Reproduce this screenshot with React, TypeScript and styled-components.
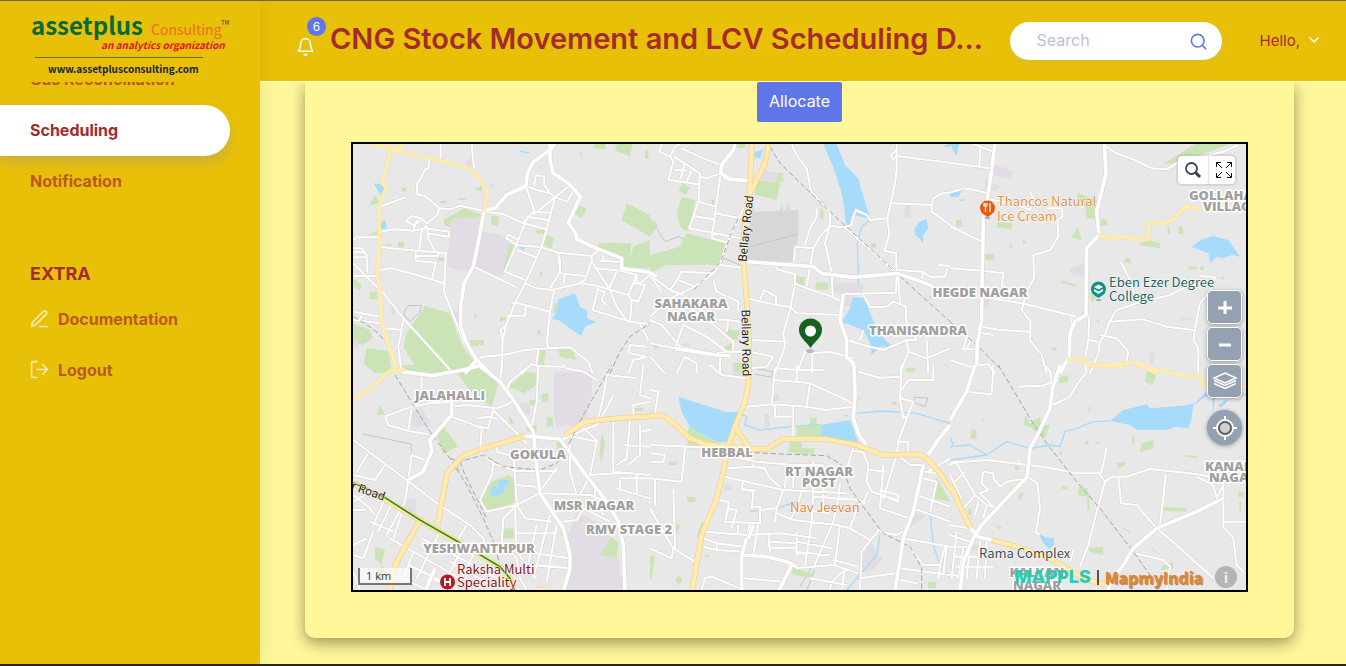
import React from 'react';
import styled, { createGlobalStyle } from 'styled-components';
import { Bell, ChevronDown, Search } from 'lucide-react';

const GlobalStyle = createGlobalStyle`
  *, *::before, *::after { box-sizing: border-box; }
  body { margin: 0; font-family: Inter, "Open Sans", sans-serif; font-size: 16px; color: #a52a2a; background: #fff799; }
  button, input { font: inherit; }
`;

const Shell = styled.div`
  display: flex;
  height: 100vh;
  border-top: 1px solid #666;
  border-bottom: 2px solid #28281e;
  overflow: hidden;
`;

const Sidebar = styled.aside`
  position: relative;
  z-index: 2;
  flex: 0 0 260px;
  display: flex;
  flex-direction: column;
  background: #e9c008;
  box-shadow: 1px 0 20px rgba(0, 0, 0, 0.08);
`;

const Brand = styled.a`
  display: block;
  flex: 0 0 81px;
  svg { display: block; }
`;

const Nav = styled.nav`
  flex: 1;
  overflow: hidden;
`;

const NavList = styled.ul<{ $scrolled?: boolean }>`
  list-style: none;
  margin: ${p => (p.$scrolled ? '-28px' : '0')} 0 0;
  padding: 0;
`;

const NavLink = styled.a<{ $active?: boolean }>`
  display: flex;
  align-items: center;
  gap: 9px;
  height: 51px;
  margin-right: 30px;
  padding: 0 0 2px 30px;
  font-weight: 700;
  text-decoration: none;
  color: ${p => (p.$active ? '#a52a2a' : '#bb5720')};
  background: ${p => (p.$active ? '#fff' : 'transparent')};
  border-radius: 0 60px 60px 0;
  box-shadow: ${p => (p.$active ? '0 7px 12px rgba(95, 118, 232, 0.21)' : 'none')};
  svg { color: #f8ecb5; }
`;

const Divider = styled.hr`
  margin: 10px 13px 20px 30px;
  border: 0;
  border-top: 1px solid #e0b912;
  & + & { margin: 0 13px 20px 30px; }
`;

const NavHeading = styled.h2`
  margin: 0;
  padding: 4px 30px 9px;
  font-size: 18px;
  line-height: 22px;
  font-weight: 700;
`;

const Page = styled.div`
  flex: 1;
  min-width: 0;
  display: flex;
  flex-direction: column;
`;

const TopBar = styled.header`
  flex: 0 0 81px;
  display: flex;
  align-items: center;
  padding: 0 24px 0 36px;
  background: #e9c008;
  border-bottom: 1px solid #fffbd0;
`;

const Alerts = styled.button`
  position: relative;
  flex: none;
  width: 34px;
  height: 44px;
  padding: 0;
  border: 0;
  background: none;
  color: #fff;
  text-align: left;
  svg { display: block; }
`;

const Badge = styled.span`
  position: absolute;
  top: -2px;
  left: 11px;
  width: 19px;
  height: 19px;
  border-radius: 50%;
  background: #5f76e8;
  font-size: 12px;
  line-height: 19px;
  text-align: center;
`;

const Title = styled.h1`
  flex: 1;
  min-width: 0;
  margin: 0;
  overflow: hidden;
  white-space: nowrap;
  font-size: 29px;
  line-height: 36px;
  font-weight: 600;
  padding-bottom: 4px;
`;

const SearchBox = styled.label`
  flex: none;
  display: flex;
  align-items: center;
  width: 212px;
  height: 38px;
  padding: 0 14px 0 27px;
  border-radius: 19px;
  background: #fff;
  color: #5f76e8;
  box-shadow: 0 3px 9px rgba(162, 176, 190, 0.15);
  input {
    flex: 1;
    min-width: 0;
    padding: 0 0 2px;
    border: 0;
    outline: 0;
    background: none;
  }
  input::placeholder { color: #b8c3d5; opacity: 1; }
`;

const Greeting = styled.button`
  flex: none;
  display: flex;
  align-items: center;
  gap: 6px;
  margin-left: 38px;
  padding: 0 0 2px;
  border: 0;
  background: none;
  color: #a52a2a;
  font-size: 15px;
  svg { color: #fff; }
`;

const Content = styled.main`
  flex: 1;
  min-height: 0;
  overflow: hidden;
  padding: 0 52px 26px 45px;
`;

const Card = styled.section`
  display: flex;
  flex-direction: column;
  align-items: center;
  gap: 20px;
  padding: 0 46px 46px;
  border-radius: 0 0 10px 10px;
  background: #fff799;
  box-shadow: 0 5px 15px rgba(0, 0, 0, 0.4);
`;

const Allocate = styled.button`
  height: 40px;
  padding: 0 12px 2px;
  border: 0;
  border-radius: 2px;
  background: #5f76e8;
  color: #fff;
  font-size: 16px;
`;

const MapFrame = styled.div`
  position: relative;
  width: 100%;
  height: 450px;
  border: 2px solid #000;
  background: #e8e8e8;
  overflow: hidden;
`;

const MapCanvas = styled.svg`
  display: block;
  width: 100%;
  height: 100%;
`;

const District = styled.text<{ $start?: boolean }>`
  font: 800 13px "Open Sans", "Noto Sans", sans-serif;
  fill: #a0a0a0;
  stroke: #fff;
  stroke-width: 3px;
  stroke-linejoin: round;
  paint-order: stroke;
  text-anchor: ${p => (p.$start ? 'start' : 'middle')};
`;

const Place = styled.text`
  font: 400 13px "Noto Sans CJK SC", "Noto Sans", sans-serif;
  stroke: #fff;
  stroke-width: 1px;
  stroke-linejoin: round;
  paint-order: stroke;
`;

const RoadName = styled.text`
  font: 400 12px Roboto, sans-serif;
  fill: #222;
  stroke: #fff;
  stroke-width: 1px;
  paint-order: stroke;
  text-anchor: middle;
`;

const MapTools = styled.div`
  position: absolute;
  top: 12px;
  right: 11px;
  display: flex;
  height: 28px;
  border-radius: 4px;
  background: #fff;
  box-shadow: 0 0 0 2px rgba(0, 0, 0, 0.08);
`;

const ToolButton = styled.button`
  display: flex;
  align-items: center;
  justify-content: center;
  width: 30px;
  padding: 0;
  border: 0;
  background: none;
  color: #344450;
  & + & { border-left: 1px solid #f6dfe0; width: 27px; padding-left: 4px; }
`;

const ZoomStack = styled.div`
  position: absolute;
  top: 146px;
  right: 4px;
  display: flex;
  flex-direction: column;
  align-items: center;
  gap: 3px;
`;

const ZoomButton = styled.button<{ $round?: boolean }>`
  display: flex;
  align-items: center;
  justify-content: center;
  width: 35px;
  height: ${p => (p.$round ? '35px' : '34px')};
  margin-top: ${p => (p.$round ? '9px' : '0')};
  padding: 0;
  border: ${p => (p.$round ? '0' : '1px solid #fff')};
  border-radius: ${p => (p.$round ? '50%' : '5px')};
  background: #93a1b0;
  box-shadow: 0 1px 4px rgba(0, 0, 0, 0.35);
`;

const ScaleBar = styled.div`
  position: absolute;
  left: 5px;
  bottom: 5px;
  width: 54px;
  height: 17px;
  padding-left: 6px;
  border: 2px solid #777;
  border-top: 0;
  background: rgba(255, 255, 255, 0.6);
  color: #333;
  font: 11px/16px "Open Sans", sans-serif;
`;

const Attribution = styled.div`
  position: absolute;
  right: 9px;
  bottom: 2px;
  display: flex;
  align-items: center;
  height: 22px;
`;

const Mappls = styled.span`
  color: #27cdb2;
  font: 800 18px/22px Inter, sans-serif;
`;

const Bar = styled.span`
  width: 2px;
  height: 15px;
  margin: 0 6px;
  background: #555;
`;

const MapmyIndia = styled.span`
  color: #e8842a;
  font: 700 16px/22px "Noto Sans CJK SC", sans-serif;
  text-shadow: 1px 1px 1px rgba(90, 40, 0, 0.6);
`;

const InfoButton = styled.button`
  width: 22px;
  height: 22px;
  margin-left: 12px;
  padding: 0;
  border: 0;
  border-radius: 50%;
  background: #b4b4b4;
  color: #eee;
  font: 700 15px/22px "Noto Sans", sans-serif;
`;

type Tile = {
  x: number; y: number;
  green: string; built: string; water: string; stream: string; rail: string;
  minor: string; major: string; trunk: string; light: string;
};

const tiles: Tile[] = [
  {
    x: -9, y: -12,
    green: 'M225 498L300 520L325 590L345 630L375 665L345 700H210L160 620L170 580ZM830 190L900 225V290L815 240ZM748 308L845 310L838 355L900 365V385L815 380V355L790 345L745 330ZM850 320L900 300V370L840 355ZM280 240L345 205L395 225L380 235H330L300 260L285 258ZM465 300L495 318L475 390L448 392L455 340ZM590 285L612 295L605 325L580 315ZM688 195L710 208L695 235L675 222ZM735 12H765L768 28L730 25ZM800 12H848L840 50L795 30ZM10 550L60 570L68 595L35 615L10 600ZM50 625L115 632L125 700H75L40 670ZM625 625L665 625L680 660L630 650ZM360 600H402V615L360 618ZM570 630H588L582 675L565 672ZM10 415L35 435L28 452L12 440ZM60 456H82V478H60ZM145 305H162V322H143ZM52 205L75 165L88 190L60 195ZM372 148L398 134L394 155ZM425 225L447 230L443 260L422 252ZM155 143H168V155H155ZM270 183H290V190H270ZM322 175H348V180H322ZM105 313H125V322H105ZM55 285L85 272V285ZM450 530H468V543H450ZM562 570H572V585H562ZM570 395H577V410H570ZM885 30H895V56H885ZM265 353H283V363H265ZM108 525L112 550H125L112 552ZM372 520L383 530L375 535ZM555 270H585V282H560ZM612 490H620V518H610Z',
    built: 'M305 235L398 232L372 395L330 392L288 378L300 290ZM398 275L450 285L480 300L455 410L372 380ZM680 35H700L696 58ZM415 135L435 128L428 150ZM122 500H135V525H125ZM312 510L328 512L322 550ZM352 58L365 50V80H352ZM10 595L28 610L22 625L10 618Z',
    water: 'M625 478L675 460L690 500L712 512V535L740 547L708 558L692 588L625 540L605 538L618 518ZM70 130L100 135L103 145L92 165ZM95 245L105 240L112 265L92 268ZM505 308L527 315L520 330L500 318ZM510 30L540 38L538 42L510 35Z',
    stream: '',
    rail: 'M10 530L45 550L85 580L105 605M780 700L810 635L840 590L900 550',
    minor: 'M272 12V55M365 12L372 85M238 60L235 85L225 88L215 110L202 130L200 162L225 168L268 205L300 208L330 197L400 212M268 205L262 225L232 250L212 235L185 228L168 243L190 255L212 242M190 272L200 240M95 198L165 172M92 275L130 268L190 272L225 265L297 275V290L232 280M10 300L20 292H88M10 325H35L50 345L52 400M10 337H45M10 352H48M92 320L150 328L205 332L288 338L282 455L345 615M230 255L215 275L207 330M230 255L235 295L255 335M197 335V362L258 368L245 418M197 348H265V338M85 390L125 385L245 418L282 430M10 370L100 460L165 540L310 700M10 408H80M10 515L90 530M35 525L28 542M10 540L95 550L108 565L155 570L158 545L165 535M155 570L145 620L155 700M402 215L460 222L520 250L590 268M528 138L560 150L600 160L615 172L652 185L672 150M528 140L552 212L520 248M552 135L558 105L583 110V135L600 160M662 135L615 172L550 225M615 172L600 230L575 320L525 430L495 490L470 550L458 600L455 700M550 215L600 218M530 230L595 240M530 235L505 300L465 395L525 420M505 300L475 283L470 295L500 315L575 322L625 338L725 348L745 330M500 330L558 352M370 380L500 442M525 430L560 445L605 450L690 430L740 437L835 465M625 338L630 395L600 445M630 355V400L645 402L640 435M645 402L705 408M612 452L600 515L590 610L597 625M485 488H500L600 515M470 527H525L528 495M470 555L452 570L458 605M377 660L400 650L460 645L525 630L595 625L660 622L715 665L728 700M515 700L545 672L560 678L640 680M565 630L558 680M725 348V365L780 450L800 500L835 548M725 365L705 420L690 430M750 362L815 366M740 385L815 392L860 405L835 465L845 485L840 548M745 445L728 510L840 545L900 552M745 450L765 455L755 480L770 495M860 405V430L885 435L865 485L840 478M850 430H875M760 345V360M800 395L775 450M900 405L870 430M835 640L840 615L890 620M840 640L890 650L850 660L835 700M870 552L895 600',
    major: 'M402 215L390 280L370 380L355 405L342 430L332 500V560L350 610L380 660L430 710M402 212L435 205L470 165L528 138L532 100L550 65L600 30L615 12M380 660L345 700M600 12V60L608 98L655 130L692 170L670 215L655 248L680 285V297L745 328L790 345L815 355V385L900 397',
    trunk: '',
    light: 'M60 10L150 30L160 38L270 62L360 85L385 110L410 150L408 190L402 215M150 10L152 30L120 38L110 80L96 128L110 145L92 175L88 220V300L82 400L90 460L95 540L110 600L130 650L138 700',
  },
  {
    x: 891, y: -12,
    green: 'M110 280L232 312L215 375H50L0 400V345L90 320ZM95 172L135 180L130 210L110 275L90 260L80 215ZM0 235L25 255L0 290ZM320 120L390 128L380 180L315 165ZM380 98H400V126H378ZM510 208H520V238H510ZM440 408L465 412L460 440L438 430ZM500 425L535 430V450L495 448ZM232 568L270 572L262 600L228 595ZM250 668H300V700H250ZM665 310L680 312L676 325L660 322ZM100 130L120 145L105 165L85 150ZM260 12H285V24H260ZM388 215L398 190L400 216ZM408 205L415 190L422 218ZM5 615L25 612L18 630ZM225 620L245 610V635H222ZM510 185L525 190V200L512 198ZM768 684H790V692H768ZM835 468L850 470L845 480ZM185 180H192V195H185Z',
    built: 'M340 90L385 100L375 122L320 118ZM555 428L640 430L638 455L610 462L605 495L585 500L580 465L550 455ZM765 198H780L782 230L763 235ZM100 610L120 608L118 622L98 620Z',
    water: 'M520 12H560L585 75L625 115L640 170L662 238L612 225L595 258L588 250L578 170L555 95ZM610 470L645 475L660 520L678 560L705 600L732 622L690 620L665 645L660 610L640 570L575 545L600 505ZM793 268L808 245L830 238L835 265L820 285L818 310L808 295L795 285ZM315 35L340 28L330 55L312 50ZM875 18L900 12V22Z',
    stream: 'M662 238L635 260L622 310L625 400V430',
    rail: 'M360 20L390 70L540 215L740 400L900 545M265 235L240 290L210 370L130 450',
    minor: 'M35 12L28 35L60 50L75 20L90 12M95 25L160 55L212 75M60 50L70 65L55 120L145 133M70 50L105 70L150 100L145 185L118 265L270 295M105 70L90 120M125 90L110 125M75 90L110 92M150 110L170 115L212 100L185 295L235 308M145 185L195 200M195 220L270 235M130 228L190 238M210 375L290 385M210 370L190 400L135 440L60 475L0 530M190 400L95 395L75 430L60 450M0 405L60 450L100 465M0 405L35 455M85 420L135 440M190 420L200 455L265 485V515M298 170L265 240L235 300L210 370M425 12L440 45L470 85L482 150L510 185L540 215V258L585 262M500 205V230L480 265L465 315M435 320L490 325M540 258L510 290L490 325L470 440M540 255L525 310L545 395L548 470M435 320L432 365M378 375L380 388L435 403V430L420 510L400 580L405 620L375 700M435 430L470 445L545 470L580 487M585 262L605 255L608 235L618 210L650 225L660 240L712 235L722 190L735 130L740 90V12M585 262L740 400M722 190L845 195L850 175L875 160L900 158M845 195V215L900 255M740 45L730 60L722 45L738 32M740 48L900 68M712 235L718 285L703 332L738 340L740 400L738 458L585 462M745 410L750 490M745 390L815 395L840 410H885L892 385M640 465L660 502L710 500L730 485L768 500V545M815 415L820 400M865 375L900 378M290 475L380 495L420 500L440 520L570 525M330 480L342 450L378 470V495M0 540L35 555L90 620L180 640M75 625L100 555L170 590L230 635M110 500L180 545L250 605V635M130 535L235 540L300 550M0 610L75 625M200 640L230 635L300 635L370 650M235 540L230 575M300 600L410 605M210 650V700M80 700L105 650L140 670V700M0 650L45 700M370 650L350 680L300 685M440 700L465 635L490 640M487 642V700M490 640L540 635L610 655M590 600L640 615L700 630L770 600L775 635L750 700M775 635L830 655L900 625M770 545L800 600L770 600M830 600L835 700M640 570L630 600',
    major: 'M290 365L380 372L490 380L515 400L610 412L740 400L800 420L850 440M0 398L20 410M580 462L570 540L590 600V650L610 670L612 700M255 12L250 30L215 75L212 100L240 118L295 122M75 625L200 645L240 648',
    trunk: 'M305 12L303 80L298 165M356 12L345 70L298 165L285 240L278 340L290 480L297 600V700',
    light: '',
  },
  {
    x: 1791, y: -12,
    green: 'M735 12H840L680 70L640 72ZM385 160L440 180L435 235L410 235L405 200L380 172ZM455 235L470 240L472 258L448 255ZM383 262L395 300L365 292ZM590 300L630 308V325L562 315ZM140 245L188 250L185 268L140 262ZM105 342H133V359H103ZM525 355H543L540 370L525 367ZM715 378L740 381V389L715 386ZM685 260H699V282H685ZM18 240H36V260H18ZM330 420L380 435L375 440L335 428ZM652 262H660V280H652ZM175 310L190 320L180 322ZM215 300L230 305L220 315ZM812 410L825 412L818 420ZM395 515H405V535H395ZM438 540L450 542L445 550ZM305 622H320V630H305ZM28 177H45V183H28ZM750 380H762V390H750ZM418 455L440 470L425 490Z',
    built: 'M135 75L185 90V118L130 105ZM358 385L400 372L405 412L365 405ZM600 640H615L610 675L598 670ZM105 120L150 140L140 152L105 150ZM100 470H120L112 505L102 500ZM695 530L730 535V540L695 537Z',
    water: 'M725 320L755 298L790 288L835 300L870 350L845 345L820 355L800 350L782 370L775 340ZM0 12H28L18 48ZM0 160L35 152L25 172L0 170Z',
    stream: '',
    rail: 'M0 545L80 615L155 690',
    minor: 'M463 15L500 40L555 60L605 85L650 88L680 70L820 35L865 15M90 20L88 80M0 68L120 85M70 12L130 35M0 158L40 145L75 150L120 162M115 178L190 190L240 210L245 195M240 155L255 185M290 205H335L338 230L322 240L325 290L300 330L250 345L252 415L232 450L215 510L242 545L240 600L275 645L290 700M0 258L95 305M0 385L96 392L160 400L155 435L175 445V480M96 470L215 490L380 530M95 560L150 570L240 575M90 578L130 585M512 365L540 420L555 465M750 408L795 412L785 445L750 490L740 540L730 600L745 625V700M750 430L700 445L660 465L560 490L500 510L478 545L465 585L450 605L445 640L420 700M480 545L580 538L650 560L730 570M418 530L415 600L405 655M415 600L445 605M450 585L500 595L535 635L530 665M0 660L60 680L115 672L135 700M50 590L40 628H78M62 600L50 628M365 535V580',
    major: 'M135 12L118 140L100 240L96 430L95 540L82 610L80 680M463 12L468 100L440 215L447 285L410 325L408 525L375 545L360 580L358 650L330 700',
    trunk: '',
    light: 'M445 285L490 297L525 290L545 298H595V248L640 250L670 238L710 198L750 208L765 195L800 165L845 155M352 657L405 658L420 678L560 668L600 690L620 700',
  },
  {
    x: -9, y: 663,
    green: 'M335 0H395L445 60L425 125L370 90L320 20ZM270 170L325 245L280 265L262 215ZM425 350L475 330L490 340L495 410L460 425L410 435L392 405ZM530 20L565 25L560 60L520 85L475 65ZM75 545L105 555L95 600L75 580ZM765 505L805 530L800 580L750 570ZM90 120L105 150H80ZM140 0H250V20H170ZM755 200L765 235L755 290L748 270ZM575 85H595V110H575ZM590 155H608V185H590ZM530 180H560V200H530ZM455 490H490V520H455ZM540 105H560V125L535 118ZM75 630L100 600L105 640L80 650ZM620 230H635V255H620ZM400 180L420 190L405 200ZM475 150L495 175L480 178ZM855 128H880V138H855ZM630 505L645 480V510ZM308 310L325 300L330 320Z',
    built: 'M612 20H725V90L705 180L620 185L612 150ZM680 440L760 480L780 520L750 570L805 580L820 680H640L665 620L650 520L665 480ZM150 410L200 400L195 455L160 440ZM175 140L215 130L240 175L200 190L180 170ZM510 110L540 115V150L515 140Z',
    water: 'M420 380L430 362L442 368L448 345L475 345L478 358L462 365L465 378L440 395L425 392Z',
    stream: '',
    rail: 'M135 30L190 120L240 200L300 280L350 360L400 460L430 530L450 600L480 640M330 290L345 330L410 460M300 280L330 290L400 270L460 305L570 315L620 295L640 270L700 150L740 80L785 0',
    minor: 'M215 30V85M105 155L185 125L240 115L305 110M105 155L115 180L175 198L235 208M185 130L175 195M305 125L350 120L440 130L470 120L490 105M305 155L385 185L415 190L430 130M385 160L410 155L440 160M395 190L390 260L430 295L490 315M455 0L450 50M470 80L480 50L530 10M565 0L560 110L545 190M640 0L650 10L700 20L740 45M10 225L70 270L170 345L260 415L360 480L400 520L410 560M55 265L20 320M105 300L75 345L10 330M185 270L225 285M185 270L175 345L165 410L110 510M430 135L530 235M440 235L500 225M440 240V260L490 275L495 330L500 420M430 295L425 330L390 405L410 440L500 420L550 395L565 385L620 310M490 318H620M495 360L560 365M500 420L525 460L605 470M500 420L460 460L455 530L500 580L510 640L530 675M495 425L500 560L560 640M500 505H620M560 480L530 620M600 450L550 640M620 480L590 650M530 560L655 580M540 600L660 610M570 385L720 390L770 410M635 225L690 200L740 180L770 130L790 90M740 175L760 100L770 30L860 40M880 0L870 90L900 100M650 210L740 230L720 330L690 390M715 330L800 325M790 170V320L900 330M840 165L830 280L800 300M810 340H900M870 180V270L835 300M735 350V400L760 450M800 370L900 400M810 345V380M660 240V320L680 390M640 470L680 465L700 430L780 470M850 150V120L900 110M700 190L745 230M870 200L900 195M820 240L900 245M860 330V390M10 390L60 430L75 450M70 480L105 400M85 500L125 415M130 520L160 430M45 390L10 410M10 435H45M60 470L130 500M50 520L10 540M40 580L70 500M10 570L40 580M120 520L190 560L260 600L330 640M190 560L160 640L230 675M270 500L200 640M340 545L290 640L270 675M375 560L330 650M215 520L350 590L440 640M175 600L300 660M420 600L390 660M300 590L420 660M350 480L320 530M10 620L30 675M240 640L340 680M460 640L510 675',
    major: 'M525 213L630 222L700 320L770 410L805 470L820 540L825 680M385 0L450 50L490 105L550 200L560 300L570 385L640 490L660 570V610L640 680M155 20L245 32L340 15L395 0M305 110V150L240 225L245 260L220 320L175 345M255 610L225 680',
    trunk: 'M645 210L705 170L800 160L900 154M525 213L400 250L340 272L293 320L262 480M10 355L100 400L210 465L340 540L450 605L480 640L495 680M210 465L135 600L118 680M560 676L590 670',
    light: 'M165 15H130L105 28L70 65L10 105M135 0L145 12',
  },
  {
    x: 891, y: 663,
    green: 'M440 182L512 178V218L430 225L440 210ZM115 182L205 235L135 245L112 240ZM480 158H500V180H480ZM420 228L455 230V265L415 262ZM430 608L485 625L480 640L425 628ZM862 340L895 400L900 410L845 400ZM248 0H275V20H250ZM110 395L138 397L135 412L113 410ZM0 570L15 575L5 640H0ZM75 640L90 632L98 647L83 659ZM155 470L165 480L150 520L140 515ZM835 650H858V670H835ZM580 145L595 150L590 160ZM725 110H740V120H725ZM770 8H795V20H770ZM55 290H80V300H58ZM270 372L285 368V385ZM165 570H178V575H165ZM75 475L90 480L82 510ZM435 250H495L490 268H440Z',
    built: 'M785 445L825 450L800 475L775 490ZM650 550L665 530L680 570L700 575L670 615L635 620L640 580ZM342 148H358V185H345ZM370 90L388 85V108H370ZM245 18H275V36H245ZM222 360H244V375H222ZM620 98L635 95V105H622Z',
    water: 'M85 95L230 142L275 140L250 190L235 230L205 232L150 205L120 185L95 140ZM512 180L600 165L625 232L555 220H512Z',
    stream: 'M270 145L290 155L285 180L330 195L420 185L512 178M620 145L700 138L800 145L900 175M690 510L680 570L590 675M860 340L840 440L850 540L870 600M440 410L380 430L300 440',
    rail: 'M290 262L420 268L530 272L575 300L600 370L680 480L700 505L780 545L815 610V680',
    minor: 'M180 0L215 30L290 40M0 75L25 80L15 145M0 240L120 245L235 250M105 250L95 350L0 340M15 345V420M0 430L40 500L70 550L135 590M70 375L75 550M0 550L65 580L70 550M0 265L45 270L40 290H0M375 10L365 115L375 125V155H425M290 125L365 118L470 125L530 135L610 125M370 45L440 50L480 55L590 105L610 120M440 0V50M480 55L470 125M430 120V215M375 10L440 15H520M625 20L690 38L750 35M755 0L750 100L790 110L770 160L745 230L740 270L700 400M755 75L775 45H850V0M755 155H775M750 100L760 160M745 230H775V270M750 275L780 300H820M610 250L580 340M610 258L640 262L655 300L650 350L665 380L740 405M700 300L690 430L780 460M660 315L710 320M690 375L745 390V410L720 400M235 310L310 305L345 310L360 340L390 365M250 275L320 290L430 300H520M310 295V310M225 335L310 355L400 375L590 385M410 300L405 370M430 300V370M280 345L275 370L310 380L305 430M275 375L315 375M205 405L235 410V430L225 470L330 475V425H305M230 430L260 435L245 490M330 435L380 430L400 375M455 380L440 430L420 465M490 290V380L485 470L465 600M520 340V440M570 355L565 400L550 470L490 610M490 395L630 405L645 415M380 445L430 465L560 480L600 490L660 525M600 490L625 420L640 410L655 380M570 480L555 600M380 430L375 470M420 430L540 445M165 500L290 510L390 505L500 520M160 520L200 535L280 545M160 545L200 555L280 560M200 530V555M300 475L290 520M325 480L310 570M265 480L262 510M355 510L360 560M440 570V500M355 530L440 535M355 548H440M440 530L545 550M435 560L540 570M435 610L550 600L625 625M550 585L625 605M545 650L590 610M545 650L540 675M160 640L185 635L270 670M155 675L165 640M280 640L400 650M480 640L590 660M585 610L575 670M690 490L635 560L630 680M760 520L900 545M690 500L740 510L765 495M790 430L900 470M800 390L900 425M820 340L860 350L840 440M825 320L860 325M900 280L835 320M750 610L900 630M780 550L820 600H870L885 545M870 600L865 640M630 640L740 625M750 645L800 655M890 540L880 630',
    major: 'M612 0L615 90L610 160L625 205L650 245M820 300L790 440L760 520L735 680M835 270L860 230L900 180M290 520L275 570V680M280 570L350 575L410 590L440 605M425 600L385 680M310 480L295 520',
    trunk: 'M295 0V60L285 110L255 185L232 250L220 320L200 400L155 510L125 680M0 152H40L75 178L120 220L165 238L310 252H350L400 222H530L620 240L700 270L810 268L835 285L870 325L900 370M255 185L295 245',
    light: 'M235 240L260 215L290 225',
  },
  {
    x: 1791, y: 663,
    green: 'M590 18L618 25L608 62L585 50ZM330 35L355 30V50L325 55ZM65 192L79 194V222L61 219ZM225 150L240 175L270 155L275 180L300 180L285 220L240 185L222 180ZM575 235L610 225V250L570 262ZM385 365L415 370L410 395L383 390ZM500 292H525V302L505 310ZM635 425L710 430V440L640 438ZM210 380L222 385L212 405L205 400ZM415 550L460 545V570L420 560ZM865 380H881V395H865ZM705 270L743 273V278L705 275ZM195 303H207V315H195ZM335 360L353 365V375L337 372ZM512 485L545 500L540 505ZM640 600L670 590V610L630 615ZM412 385H418V435H412ZM92 163L105 165L100 170ZM405 228H415V238H405ZM435 230L450 232V237L435 235ZM545 215H553V235H545ZM840 625L855 620V640L838 638ZM868 410H873V440H868ZM135 480L155 485L150 495ZM55 430H65V450H55ZM325 262L335 258V275Z',
    built: 'M65 540H85V555H65ZM412 122L425 128L420 145L412 140ZM0 140L15 135V150H0ZM600 545L625 560L615 565Z',
    water: 'M480 168L520 135L590 118L600 130L700 122L735 115L765 85L775 90L730 120L725 160L715 190L680 185L650 195L560 195L540 180ZM785 80L795 95L790 145ZM805 120L835 100L825 118L810 128ZM265 505L290 518L312 518V540L298 552L280 535Z',
    stream: 'M0 245L60 240L110 270L170 230L240 250L300 240L330 245L345 200L380 190L430 170L480 168M0 285L110 270M0 215L10 240M765 85L800 80L888 90',
    rail: 'M145 0L240 160L290 235L380 350L450 430L550 560L600 630',
    minor: 'M50 80L125 88L130 0M285 0L300 20L305 60M205 65L275 62L300 55M405 0L410 20L380 60L360 95L310 120M0 293L110 285L232 300L280 305L380 325H450M208 285V295M450 330L465 350L485 335L530 335L600 312L720 325L820 340L888 330M470 245L460 300L450 330M465 350L440 440L415 540L390 605M505 335L513 415L560 420L620 490L690 550L745 600L790 640M647 325L640 400L630 480M740 335L790 360L800 400L820 360M820 340V485L850 520L860 600L880 620M820 470H888M100 320L130 325V340L150 365L170 350L232 340M100 320L95 355L115 375L90 385L135 430M232 335L262 355L270 430L258 500L270 510M20 295L75 390L40 430M45 320L15 350M0 330L35 400M75 390L110 420L130 425M85 410L75 450M110 420L100 460M0 480L55 490M0 510L60 530M0 545H60M10 575H120M20 605H130M60 540L50 640M90 530L80 640M20 500L5 640M110 530L105 640M0 625L40 640M40 550L25 640M555 565L640 585L660 605L650 675M370 555L360 590M15 290L0 300',
    major: 'M330 0L308 70L300 130L265 205L240 250L232 335L170 400L95 480L70 520L40 590L30 680M820 400L740 440L620 490L550 550L520 600L490 640L470 680M75 0L50 80L0 165M62 490L85 515L125 525',
    trunk: 'M0 360L62 490M125 525L200 545L300 580L400 640L465 660',
    light: 'M560 0L620 15L720 35L755 35L760 60L775 62M410 0L520 3M860 65H890',
  },
];

type Layer = { key: keyof Tile; fill?: string; stroke?: string; width?: number; dash?: string };

const layers: Layer[] = [
  { key: 'green', fill: '#cbe4b7' },
  { key: 'built', fill: '#e2dce4' },
  { key: 'water', fill: '#a6dbfc' },
  { key: 'stream', stroke: '#a6dbfc', width: 4 },
  { key: 'minor', stroke: '#ddd3cf', width: 9 },
  { key: 'minor', stroke: '#ffffff', width: 6 },
  { key: 'rail', stroke: '#a5a5a5', width: 3, dash: '16 8' },
  { key: 'major', stroke: '#ddd3cf', width: 14 },
  { key: 'major', stroke: '#ffffff', width: 11 },
  { key: 'light', stroke: '#eadfbd', width: 12 },
  { key: 'light', stroke: '#ffedb0', width: 10 },
  { key: 'trunk', stroke: '#f1cf93', width: 17 },
  { key: 'trunk', stroke: '#ffebae', width: 13 },
];

const districts: { x: number; y: number; name: string }[] = [
  { x: 691, y: 308, name: 'SAHAKARA' }, { x: 691, y: 321, name: 'NAGAR' },
  { x: 980, y: 297, name: 'HEGDE NAGAR' }, { x: 918, y: 335, name: 'THANISANDRA' },
  { x: 450, y: 400, name: 'JALAHALLI' }, { x: 538, y: 459, name: 'GOKULA' },
  { x: 727, y: 457, name: 'HEBBAL' }, { x: 819, y: 476, name: 'RT NAGAR' },
  { x: 819, y: 487, name: 'POST' }, { x: 594, y: 510, name: 'MSR NAGAR' },
  { x: 629, y: 534, name: 'RMV STAGE 2' }, { x: 479, y: 553, name: 'YESHWANTHPUR' },
  { x: 1037, y: 577, name: 'KALYAN' }, { x: 1037, y: 590, name: 'NAGAR' },
];

const edgeDistricts: { x: number; y: number; name: string }[] = [
  { x: 1189, y: 200, name: 'GOLLAHA' }, { x: 1203, y: 211, name: 'VILLAG' },
  { x: 1205, y: 471, name: 'KANAI' }, { x: 1209, y: 482, name: 'NAGA' },
];

const places: { x: number; y: number; name: string; color: string }[] = [
  { x: 997, y: 206, name: 'Thancos Natural', color: '#e0934c' },
  { x: 997, y: 221, name: 'Ice Cream', color: '#e0934c' },
  { x: 1109, y: 287, name: 'Eben Ezer Degree', color: '#17645c' },
  { x: 1109, y: 301, name: 'College', color: '#17645c' },
  { x: 790, y: 512, name: 'Nav Jeevan', color: '#e0883a' },
  { x: 457, y: 574, name: 'Raksha Multi', color: '#84161c' },
  { x: 457, y: 587, name: 'Speciality', color: '#84161c' },
  { x: 979, y: 558, name: 'Rama Complex', color: '#3e4c50' },
];

function CityMap() {
  return (
    <MapCanvas viewBox="0 0 2679 1338" preserveAspectRatio="xMidYMid slice" role="img" aria-label="Map">
      <path d="M1199 183L1207 203L1336 198V273L1323 353L1181 350L1189 248Z" fill="#d7d7d7" />
      <path d="M1189 308L1334 270M911 253L936 293L976 278L1101 338L1161 363M155 500L165 485L205 484L200 505L172 532L153 515ZM1210 675L1260 683L1255 700L1205 690M1685 760L1725 762L1715 788L1682 775ZM1340 1330L1402 1228L1362 1338M30 870L150 895L175 900V925" fill="none" stroke="#c4c4c4" strokeWidth="3" />
      {layers.map((layer, i) => (
        <g
          key={i}
          fill={layer.fill ?? 'none'}
          stroke={layer.stroke ?? 'none'}
          strokeWidth={layer.width}
          strokeDasharray={layer.dash}
          strokeLinejoin="round"
        >
          {tiles.map((tile, n) => (
            <path key={n} transform={`translate(${tile.x} ${tile.y})`} d={String(tile[layer.key])} />
          ))}
        </g>
      ))}
      <path d="M0 1016L91 1058L201 1128L331 1202L441 1268L471 1303L484 1338" fill="none" stroke="#2b930f" strokeWidth="5" />
      <g transform="scale(3) translate(-353 -144)">
        {districts.map(d => <District key={d.name + d.y} x={d.x} y={d.y}>{d.name}</District>)}
        {edgeDistricts.map(d => <District key={d.name} $start x={d.x} y={d.y}>{d.name}</District>)}
        {places.map(p => <Place key={p.name} x={p.x} y={p.y} fill={p.color}>{p.name}</Place>)}
        <RoadName transform="translate(750 229) rotate(-84)">Bellary Road</RoadName>
        <RoadName transform="translate(742 343) rotate(89)">Bellary Road</RoadName>
        <RoadName transform="translate(367 495) rotate(19)">r Road</RoadName>

        <ellipse cx="810" cy="351" rx="4" ry="2" fill="#bbb" />
        <path d="M810.500 348C805 340 799 337 799 330A11.500 11.500 0 0 1 822 330C822 337 816 340 810.500 348Z" fill="#176120" />
        <circle cx="810.500" cy="331" r="5.500" fill="#fff" />

        <ellipse cx="987.500" cy="218" rx="3" ry="1" fill="#aaa" />
        <path d="M987.500 217L983 214A7.500 7.500 0 1 1 992 214Z" fill="#e8590c" />
        <path d="M985 203V206M984 203V206H987V203M985.500 206V212M990 203V212" stroke="#fff" strokeWidth="1.200" fill="none" />

        <ellipse cx="1098.500" cy="300" rx="3" ry="1" fill="#aaa" />
        <path d="M1098.500 298L1094 295A7.500 7.500 0 1 1 1103 295Z" fill="#0c9488" />
        <path d="M1094 287L1098.500 284.500L1103 287L1098.500 289.500ZM1094 289L1098.500 291.500L1103 289V291L1098.500 294L1094 291Z" fill="#fff" />

        <circle cx="447.500" cy="582" r="7.500" fill="#b01c22" />
        <path d="M445 578V586M450 578V586M445 582H450" stroke="#fff" strokeWidth="1.800" />
      </g>
    </MapCanvas>
  );
}

const LogoText = styled.text<{ $size: number; $weight?: number; $italic?: boolean }>`
  font-family: "Noto Sans CJK SC", "Open Sans", sans-serif;
  font-size: ${p => p.$size}px;
  font-weight: ${p => p.$weight ?? 400};
  font-style: ${p => (p.$italic ? 'italic' : 'normal')};
`;

function Logo() {
  return (
    <svg width="260" height="81" viewBox="0 1 260 81" role="img" aria-label="assetplus Consulting">
      <LogoText x="31" y="35" $size={24} $weight={700} fill="#046a38">assetplus</LogoText>
      <LogoText x="151" y="35" $size={14} fill="#f26a21">Consulting</LogoText>
      <LogoText x="221" y="25" $size={6} fill="#333">TM</LogoText>
      <LogoText x="101" y="49" $size={10} $weight={700} $italic fill="#e8112d">an analytics organization</LogoText>
      <path d="M35 57.500H203" stroke="#6b6440" />
      <LogoText x="48" y="73" $size={10} $weight={700} fill="#1a2440">www.assetplusconsulting.com</LogoText>
    </svg>
  );
}

export default function App() {
  return (
    <>
      <GlobalStyle />
      <Shell>
        <Sidebar>
          <Brand href="#"><Logo /></Brand>
          <Nav>
            <NavList $scrolled>
              <li><NavLink href="#">Gas Reconciliation</NavLink></li>
              <li><NavLink href="#" $active>Scheduling</NavLink></li>
              <li><NavLink href="#">Notification</NavLink></li>
            </NavList>
            <Divider />
            <Divider />
            <NavHeading>EXTRA</NavHeading>
            <NavList>
              <li>
                <NavLink href="#">
                  <svg width="19" height="19" viewBox="0 0 24 24" fill="none" stroke="currentColor" strokeWidth="2" strokeLinecap="round" strokeLinejoin="round">
                    <path d="M12 22H22M16.500 3.500A2.100 2.100 0 0 1 20.500 6.500L7 20L2 22L3 17Z" />
                  </svg>
                  Documentation
                </NavLink>
              </li>
              <li>
                <NavLink href="#">
                  <svg width="19" height="19" viewBox="0 0 24 24" fill="none" stroke="currentColor" strokeWidth="2" strokeLinecap="round" strokeLinejoin="round">
                    <path d="M9 22H4A2 2 0 0 1 2 20V4A2 2 0 0 1 4 2H9M16 18L22 12L16 6M22 12H9" />
                  </svg>
                  Logout
                </NavLink>
              </li>
            </NavList>
          </Nav>
        </Sidebar>
        <Page>
          <TopBar>
            <Alerts aria-label="Notifications">
              <svg width="19" height="19" viewBox="0 0 24 24" fill="none" stroke="currentColor" strokeWidth="2" strokeLinecap="round" strokeLinejoin="round" transform="translate(0 5)">
                <path d="M18 8A6 6 0 0 0 6 8C6 15 3 17 3 18H21C21 17 18 15 18 8M10.300 22A2 2 0 0 0 13.700 22" />
              </svg>
              <Badge>6</Badge>
            </Alerts>
            <Title>CNG Stock Movement and LCV Scheduling D...</Title>
            <SearchBox>
              <input type="search" placeholder="Search" aria-label="Search" />
              <Search size={19} strokeWidth={2} />
            </SearchBox>
            <Greeting>Hello, <ChevronDown size={16} strokeWidth={2} /></Greeting>
          </TopBar>
          <Content>
            <Card>
              <Allocate>Allocate</Allocate>
              <MapFrame>
                <CityMap />
                <MapTools>
                  <ToolButton aria-label="Search map">
                    <svg width="18" height="18" viewBox="0 0 18 18" fill="none" stroke="currentColor">
                      <circle cx="7.500" cy="7.500" r="5.500" strokeWidth="1.800" />
                      <path d="M11.500 11.500L16 16" strokeWidth="3" />
                    </svg>
                  </ToolButton>
                  <ToolButton aria-label="Full screen">
                    <svg width="16" height="16" viewBox="0 0 16 16" fill="none" stroke="#111" strokeWidth="1">
                      <path d="M.5 5V.5H5M.5.5L6 6M11 .5H15.500V5M15.500.5L10 6M.5 11V15.500H5M.5 15.500L6 10M11 15.500H15.500V11M15.500 15.500L10 10" />
                    </svg>
                  </ToolButton>
                </MapTools>
                <ZoomStack>
                  <ZoomButton aria-label="Zoom in">
                    <svg width="14" height="14" viewBox="0 0 14 14" stroke="#fff" strokeWidth="3"><path d="M0 8H14M7 1V14" /></svg>
                  </ZoomButton>
                  <ZoomButton aria-label="Zoom out">
                    <svg width="12" height="14" viewBox="0 0 12 14" stroke="#fff" strokeWidth="3"><path d="M0 8H12" /></svg>
                  </ZoomButton>
                  <ZoomButton aria-label="Layers">
                    <svg width="26" height="20" viewBox="0 0 26 20" fill="none" stroke="#fff" strokeWidth="1.500">
                      <path d="M13 2L24 7L13 12L2 7ZM2 9.500L13 14.500L24 9.500M2 12.500L13 17.500L24 12.500" />
                    </svg>
                  </ZoomButton>
                  <ZoomButton $round aria-label="My location">
                    <svg width="24" height="24" viewBox="0 0 24 24" fill="none" stroke="#fff" strokeWidth="2">
                      <circle cx="12" cy="12" r="8" />
                      <circle cx="12" cy="12" r="6" fill="#d0d0d0" stroke="#666" />
                      <path d="M12 0V5M12 19V24M0 12H5M19 12H24" />
                    </svg>
                  </ZoomButton>
                </ZoomStack>
                <ScaleBar>1 km</ScaleBar>
                <Attribution>
                  <Mappls>MAPPLS</Mappls>
                  <Bar />
                  <MapmyIndia>MapmyIndia</MapmyIndia>
                  <InfoButton aria-label="Map information">i</InfoButton>
                </Attribution>
              </MapFrame>
            </Card>
          </Content>
        </Page>
      </Shell>
    </>
  );
}
